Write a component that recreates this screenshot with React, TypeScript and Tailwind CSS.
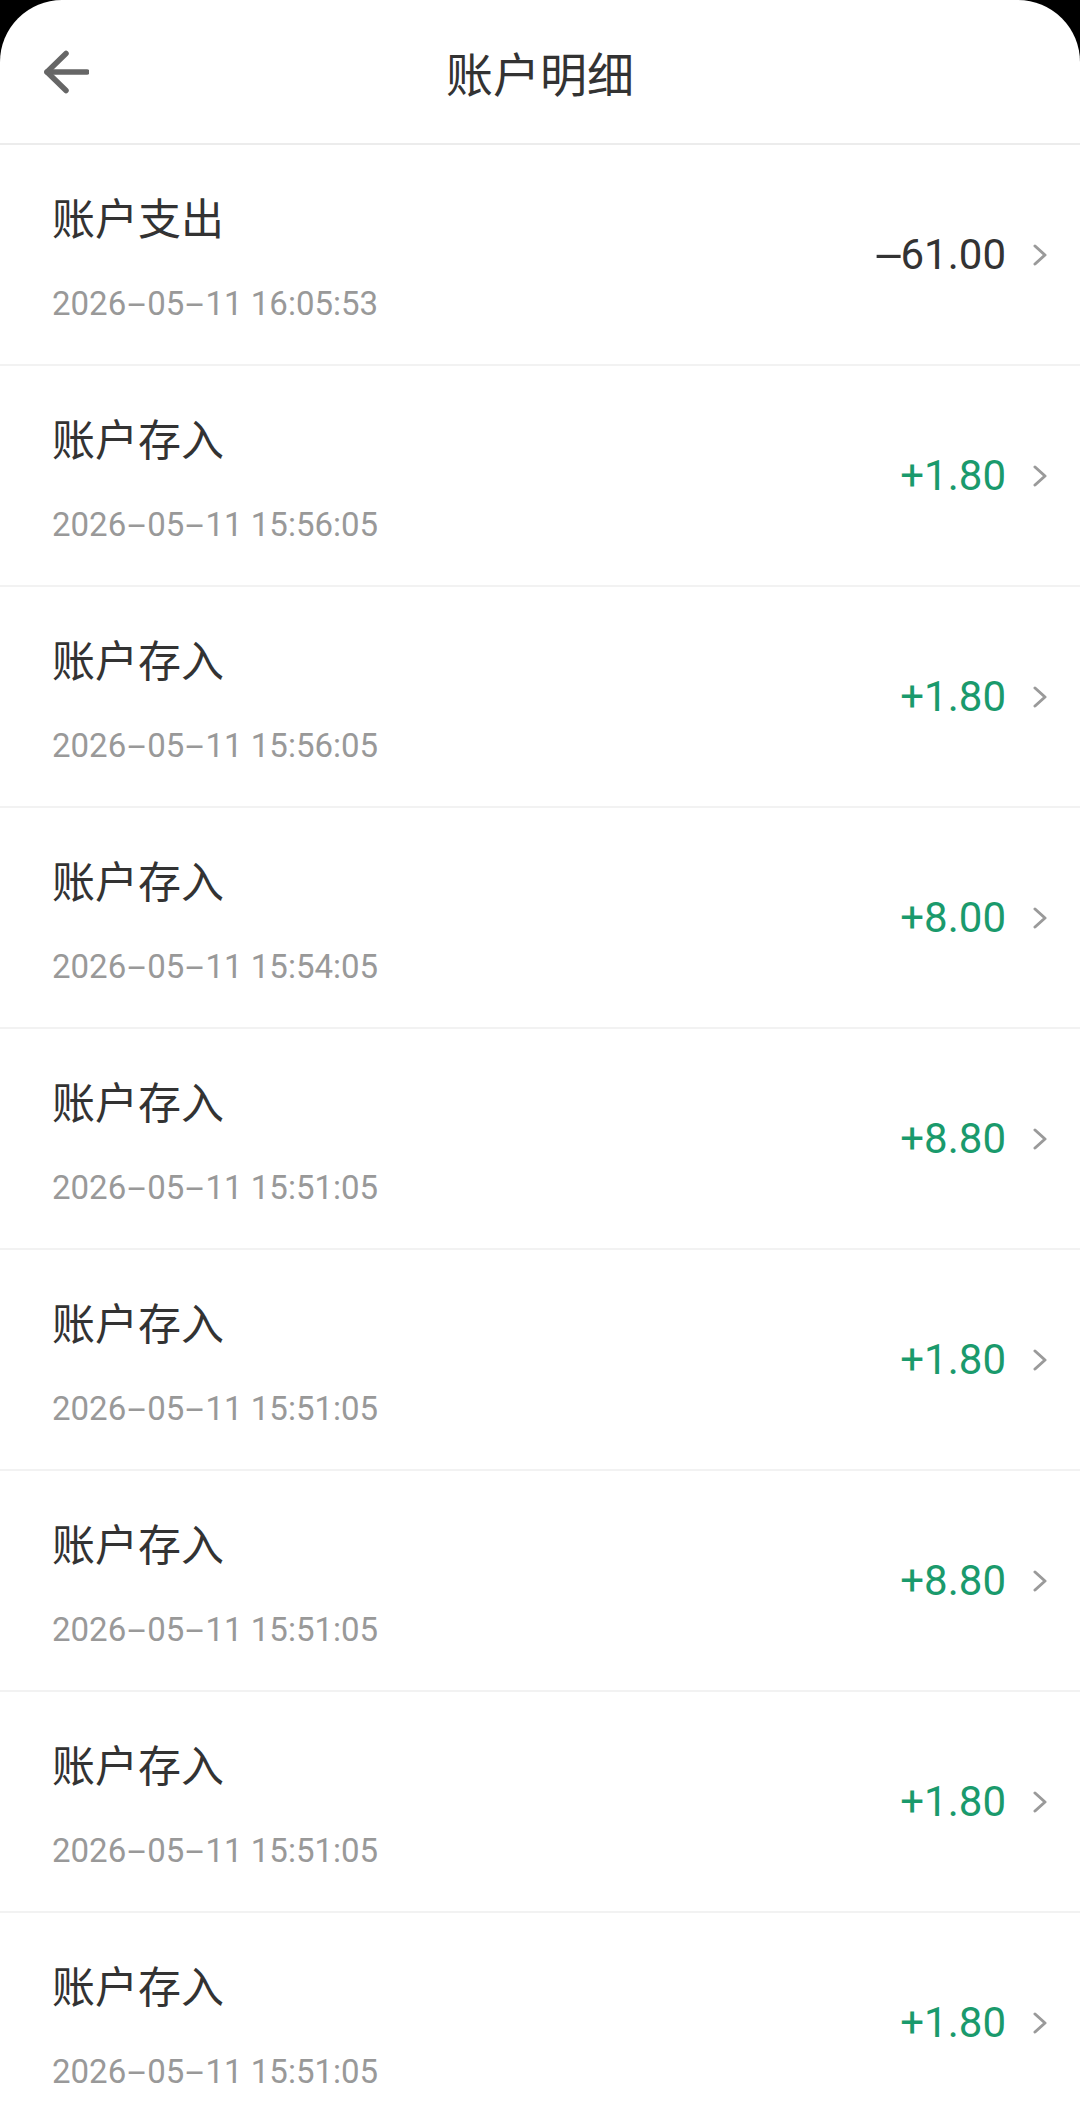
import React from "react";

type Item = { title: string; time: string; amount: string; positive: boolean };

const items: Item[] = [
  { title: "账户支出", time: "2026-05-11 16:05:53", amount: "-61.00", positive: false },
  { title: "账户存入", time: "2026-05-11 15:56:05", amount: "+1.80", positive: true },
  { title: "账户存入", time: "2026-05-11 15:56:05", amount: "+1.80", positive: true },
  { title: "账户存入", time: "2026-05-11 15:54:05", amount: "+8.00", positive: true },
  { title: "账户存入", time: "2026-05-11 15:51:05", amount: "+8.80", positive: true },
  { title: "账户存入", time: "2026-05-11 15:51:05", amount: "+1.80", positive: true },
  { title: "账户存入", time: "2026-05-11 15:51:05", amount: "+8.80", positive: true },
  { title: "账户存入", time: "2026-05-11 15:51:05", amount: "+1.80", positive: true },
  { title: "账户存入", time: "2026-05-11 15:51:05", amount: "+1.80", positive: true },
];

const font = { fontFamily: 'Roboto, "Noto Sans CJK SC", sans-serif' };

function DateText({ text }: { text: string }) {
  const parts = text.split("-");
  return (
    <>
      {parts.map((p, i) => (
        <React.Fragment key={i}>
          {i > 0 && <span className="mx-[6px] inline-block scale-x-[2]">-</span>}
          {p}
        </React.Fragment>
      ))}
    </>
  );
}

function Amount({ text }: { text: string }) {
  if (text.startsWith("-")) {
    return (
      <>
        <span className="mx-[6px] inline-block scale-x-[2.4]">-</span>
        {text.slice(1)}
      </>
    );
  }
  return <>{text}</>;
}

function Row({ item }: { item: Item }) {
  return (
    <div className="flex h-[221px] items-center border-b-2 border-[#f2f2f2] pl-[52px] pr-[33px]">
      <div className="flex h-full flex-1 flex-col pt-[41px]">
        <div className="text-[43px] leading-[60px] text-[#333333]" style={{ fontFamily: '"Noto Sans CJK SC", sans-serif' }}>
          {item.title}
        </div>
        <div className="mt-[36px] text-[33px] leading-[44px] text-[#999999]">
          <DateText text={item.time} />
        </div>
      </div>
      <div
        className={
          "text-[42px] leading-[50px] " + (item.positive ? "text-[#1a9a6c]" : "text-[#333333]")
        }
      >
        <Amount text={item.amount} />
      </div>
      <svg width="14" height="22" viewBox="0 0 14 22" className="ml-[27px]">
        <path d="M2 2 L12 11 L2 20" fill="none" stroke="#9a9a9a" strokeWidth="3" strokeLinecap="round" strokeLinejoin="round" />
      </svg>
    </div>
  );
}

export default function App() {
  return (
    <div className="h-[2118px] w-[1080px] overflow-hidden bg-black" style={font}>
      <div className="h-full rounded-t-[62px] bg-white">
        <div className="grid h-[145px] grid-cols-[1fr_auto_1fr] items-center border-b-2 border-[#ececec]">
          <div className="pl-[43px]">
            <svg width="46" height="44" viewBox="0 0 46 44">
              <path d="M4 22 H44" fill="none" stroke="#666666" strokeWidth="5.5" strokeLinecap="round" />
              <path d="M23 3.5 L4 22 L23 40.5" fill="none" stroke="#666666" strokeWidth="5.5" strokeLinecap="round" strokeLinejoin="round" />
            </svg>
          </div>
          <div className="text-[47px] leading-[60px] text-[#333333]" style={{ fontFamily: '"Noto Sans CJK SC", sans-serif' }}>
            账户明细
          </div>
          <div />
        </div>
        {items.map((it, i) => (
          <Row key={i} item={it} />
        ))}
      </div>
    </div>
  );
}
